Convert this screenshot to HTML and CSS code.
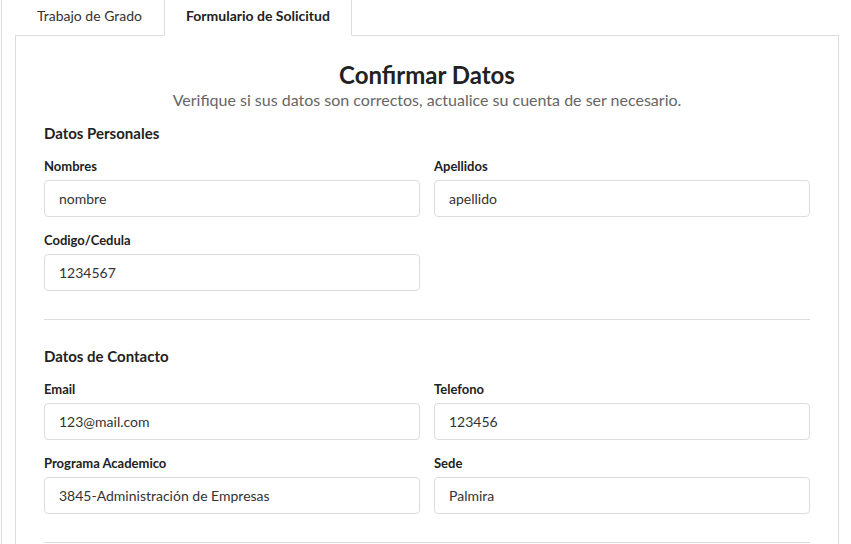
FILE: index.html
```html
<!DOCTYPE html>
<html lang="es">
<head>
<meta charset="utf-8">
<title>Formulario de Solicitud</title>
<link rel="stylesheet" href="styles.css">
</head>
<body>
<div class="page">
  <ul class="tabs">
    <li class="tab">Trabajo de Grado</li>
    <li class="tab active">Formulario de Solicitud</li>
  </ul>
  <div class="panel">
    <h1 class="title">Confirmar Datos</h1>
    <p class="subtitle">Verifique si sus datos son correctos, actualice su cuenta de ser necesario.</p>

    <h2 class="section-title">Datos Personales</h2>
    <div class="grid">
      <div class="field">
        <label class="label">Nombres</label>
        <div class="input">nombre</div>
      </div>
      <div class="field">
        <label class="label">Apellidos</label>
        <div class="input">apellido</div>
      </div>
      <div class="field">
        <label class="label">Codigo/Cedula</label>
        <div class="input">1234567</div>
      </div>
    </div>
    <hr class="divider">

    <h2 class="section-title">Datos de Contacto</h2>
    <div class="grid">
      <div class="field">
        <label class="label">Email</label>
        <div class="input">123@mail.com</div>
      </div>
      <div class="field">
        <label class="label">Telefono</label>
        <div class="input">123456</div>
      </div>
      <div class="field">
        <label class="label">Programa Academico</label>
        <div class="input">3845-Administración de Empresas</div>
      </div>
      <div class="field">
        <label class="label">Sede</label>
        <div class="input">Palmira</div>
      </div>
    </div>
    <hr class="divider">
  </div>
</div>
</body>
</html>
```

FILE: styles.css
```css
html, body {
  margin: 0;
  padding: 0;
  background: #fff;
  overflow: hidden;
}
body {
  font-family: Lato, "Open Sans", sans-serif;
  color: #222;
  height: 544px;
}
.page {
  margin-left: 1px;
  border-left: 1px solid #ddd;
  padding: 0 12px 0 13px;
  min-height: 600px;
}
.tabs {
  list-style: none;
  margin: -1px 0 -1px 0;
  padding: 0;
  display: flex;
  position: relative;
  z-index: 1;
}
.tab {
  font-size: 14px;
  line-height: 20px;
  padding: 6px 21px 9px 21px;
  border: 1px solid transparent;
  color: #333;
}
.tab.active {
  font-weight: 700;
  color: #222;
  background: #fff;
  border-color: #ddd #ddd transparent #ddd;
}
.panel {
  border: 1px solid #ddd;
  padding: 24px 28px 40px 28px;
}
.title {
  margin: 0;
  text-align: center;
  font-size: 24px;
  line-height: 30px;
  font-weight: 700;
  color: #222;
}
.subtitle {
  margin: 0 0 13px 0;
  text-align: center;
  font-size: 16px;
  line-height: 20px;
  color: #666;
}
.section-title {
  margin: 0 0 14px 0;
  font-size: 15px;
  line-height: 20px;
  font-weight: 700;
  color: #222;
}
.grid {
  display: grid;
  grid-template-columns: 376px 376px;
  column-gap: 14px;
}
.field {
  margin-bottom: 14px;
}
.label {
  display: block;
  font-size: 13px;
  line-height: 18px;
  font-weight: 700;
  color: #222;
  margin-bottom: 5px;
}
.input {
  box-sizing: border-box;
  height: 37px;
  border: 1px solid #ddd;
  border-radius: 4px;
  padding: 0 14px;
  font-size: 14px;
  line-height: 35px;
  color: #333;
}
.divider {
  border: 0;
  border-top: 1px solid #ddd;
  margin: 14px 0 26px 0;
  height: 0;
}
```
